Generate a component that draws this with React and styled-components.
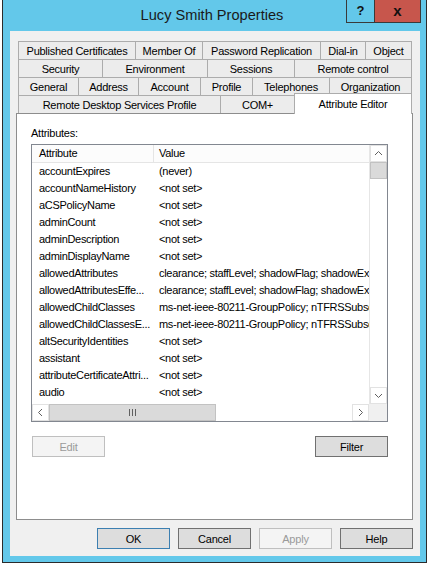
import React from "react"
import styled, { createGlobalStyle } from "styled-components"

const GlobalStyle = createGlobalStyle`
body {
  margin: 0;
  background: #fff;
  font-family: "Liberation Sans", Arial, sans-serif;
  color: #000;
}
`

const tabRows = [
    [
        { label: "Published Certificates", w: 117 },
        { label: "Member Of", w: 67 },
        { label: "Password Replication", w: 118 },
        { label: "Dial-in", w: 45 },
        { label: "Object", w: 46 },
    ],
    [
        { label: "Security", w: 84 },
        { label: "Environment", w: 105 },
        { label: "Sessions", w: 87 },
        { label: "Remote control", w: 117 },
    ],
    [
        { label: "General", w: 60 },
        { label: "Address", w: 60 },
        { label: "Account", w: 62 },
        { label: "Profile", w: 52 },
        { label: "Telephones", w: 77 },
        { label: "Organization", w: 82 },
    ],
    [
        { label: "Remote Desktop Services Profile", w: 202 },
        { label: "COM+", w: 74 },
        { label: "Attribute Editor", w: 117, active: true },
    ],
]

const attributes = [
    ["accountExpires", "(never)"],
    ["accountNameHistory", "<not set>"],
    ["aCSPolicyName", "<not set>"],
    ["adminCount", "<not set>"],
    ["adminDescription", "<not set>"],
    ["adminDisplayName", "<not set>"],
    ["allowedAttributes", "clearance; staffLevel; shadowFlag; shadowExpire; shadowInactive"],
    ["allowedAttributesEffe...", "clearance; staffLevel; shadowFlag; shadowExpire; shadowInactive"],
    ["allowedChildClasses", "ms-net-ieee-80211-GroupPolicy; nTFRSSubscriptions; classStore"],
    ["allowedChildClassesE...", "ms-net-ieee-80211-GroupPolicy; nTFRSSubscriptions; classStore"],
    ["altSecurityIdentities", "<not set>"],
    ["assistant", "<not set>"],
    ["attributeCertificateAttri...", "<not set>"],
    ["audio", "<not set>"],
    ["authOrig", "<not set>"],
]

const Window = styled.div`
box-sizing: border-box;
margin-left: 2px;
width: 425px;
height: 563px;
display: flex;
flex-direction: column;
background: #63c8ea;
border: 1px solid #2b2b2b;
border-top: none;
padding: 0 6px 6px 7px;
`

const TitleBar = styled.div`
display: grid;
grid-template-columns: 1fr auto 1fr;
height: 31px;
margin: 0 -6px 0 -7px;
padding-right: 5px;
flex-shrink: 0;
`

const Title = styled.div`
grid-column: 2;
font-size: 14.6px;
line-height: 31px;
color: #1a1a1a;
white-space: nowrap;
`

const Captions = styled.div`
grid-column: 3;
justify-self: end;
align-self: start;
display: flex;
border: 1px solid #3a3a3a;
border-top: none;
height: 22px;
`

const CaptionButton = styled.div`
width: ${p => p.w}px;
background: ${p => p.close ? "#c7564c" : "transparent"};
border-left: ${p => p.close ? "1px solid #3a3a3a" : "none"};
display: flex;
align-items: center;
justify-content: center;
font-weight: bold;
font-size: ${p => p.close ? "15px" : "13px"};
color: #111;
line-height: 1;
padding-bottom: 2px;
box-sizing: border-box;
`

const Body = styled.div`
flex: 1;
display: flex;
flex-direction: column;
background: #f0f0f0;
padding: 10px 7px 0 6px;
`

const TabStrip = styled.div`
display: flex;
flex-direction: column;
margin-left: 2px;
`

const TabRow = styled.div`
display: flex;
align-items: flex-end;
height: 19px;
margin-bottom: -1px;
`

const Tab = styled.div`
box-sizing: border-box;
flex-shrink: 0;
width: ${p => p.w + 1}px;
height: ${p => p.active ? 21 : 19}px;
margin-right: -1px;
border: 1px solid #acacac;
border-bottom: ${p => p.active ? "none" : "1px solid #acacac"};
background: ${p => p.active ? "#fff" : "#ececec"};
position: ${p => p.active ? "relative" : "static"};
z-index: ${p => p.active ? 1 : "auto"};
display: flex;
align-items: center;
justify-content: center;
font-size: 11px;
letter-spacing: -0.25px;
white-space: nowrap;
padding-top: ${p => p.active ? 0 : 0}px;
`

const Panel = styled.div`
box-sizing: border-box;
height: 407px;
background: #fff;
border: 1px solid #8d8d8d;
padding: 12px 24px 0 14px;
display: flex;
flex-direction: column;
`

const Label = styled.div`
font-size: 11px;
letter-spacing: -0.25px;
line-height: 14px;
margin-bottom: 4px;
`

const ListBox = styled.div`
box-sizing: border-box;
width: 357px;
height: 278px;
border: 1px solid #828790;
display: grid;
grid-template-columns: 337px 18px;
grid-template-rows: 259px 17px;
`

const ListView = styled.div`
overflow: hidden;
`

const HeaderRow = styled.div`
display: flex;
height: 17px;
border-bottom: 1px solid #e5e5e5;
background: #fcfcfc;
`

const Row = styled.div`
display: flex;
height: 17px;
`

const Cell = styled.div`
box-sizing: border-box;
flex-shrink: 0;
width: ${p => p.first ? "122px" : "auto"};
flex: ${p => p.first ? "none" : 1};
padding-left: ${p => p.first ? 7 : 5}px;
border-right: ${p => p.head && p.first ? "1px solid #e5e5e5" : "none"};
font-size: 11px;
letter-spacing: -0.3px;
line-height: 17px;
white-space: nowrap;
overflow: hidden;
`

const VScroll = styled.div`
display: flex;
flex-direction: column;
border-left: 1px solid #e6e6e6;
background: #fff;
`

const HScroll = styled.div`
display: flex;
background: #fff;
`

const ArrowBox = styled.div`
box-sizing: border-box;
flex-shrink: 0;
width: 17px;
height: 17px;
border: 1px solid #e2e2e2;
display: flex;
align-items: center;
justify-content: center;
background: #fff;
`

const Track = styled.div`
flex: 1;
`

const Thumb = styled.div`
box-sizing: border-box;
flex-shrink: 0;
width: ${p => p.horizontal ? "167px" : "17px"};
height: 17px;
background: #dadada;
border: 1px solid #c2c2c2;
display: flex;
align-items: center;
justify-content: center;
`

const Corner = styled.div`
background: #f0f0f0;
`

const Actions = styled.div`
display: flex;
justify-content: space-between;
margin-top: 14px;
padding-left: 1px;
`

const Button = styled.div`
box-sizing: border-box;
width: 73px;
height: 21px;
display: flex;
align-items: center;
justify-content: center;
font-size: 11px;
letter-spacing: -0.2px;
background: ${p => p.disabled ? "#f4f4f4" : "#dddddd"};
border: 1px solid ${p => p.disabled ? "#bfbfbf" : p.primary ? "#3c7fb1" : "#707070"};
color: ${p => p.disabled ? "#9a9a9a" : "#000"};
`

const Footer = styled.div`
display: flex;
justify-content: flex-end;
gap: 8px;
margin-top: 8px;
`

const Chevron = ({ dir }) => {
    const pts = {
        up: "5,10 8.5,6.5 12,10",
        down: "5,7 8.5,10.5 12,7",
        left: "10,5 6.5,8.5 10,12",
        right: "7,5 10.5,8.5 7,12",
    }[dir]
    return (
        <svg width="15" height="15" viewBox="1 1 15 15">
            <polyline points={pts} fill="none" stroke="#606060" strokeWidth="1" />
        </svg>
    )
}

const Grip = () => (
    <svg width="9" height="7" viewBox="0 0 9 7">
        <path d="M1.5 0v7M4.5 0v7M7.5 0v7" stroke="#606060" strokeWidth="1" />
    </svg>
)

export default function App() {
    return (
        <>
            <GlobalStyle />
            <Window>
                <TitleBar>
                    <Title>Lucy Smith Properties</Title>
                    <Captions>
                        <CaptionButton w={27}>?</CaptionButton>
                        <CaptionButton w={46} close>x</CaptionButton>
                    </Captions>
                </TitleBar>
                <Body>
                    <TabStrip>
                        {tabRows.map((row, i) =>
                            <TabRow key={i}>
                                {row.map(tab =>
                                    <Tab key={tab.label} w={tab.w} active={tab.active}>{tab.label}</Tab>)}
                            </TabRow>)}
                    </TabStrip>
                    <Panel>
                        <Label>Attributes:</Label>
                        <ListBox>
                            <ListView>
                                <HeaderRow>
                                    <Cell first head>Attribute</Cell>
                                    <Cell head>Value</Cell>
                                </HeaderRow>
                                {attributes.map(([name, value]) =>
                                    <Row key={name}>
                                        <Cell first>{name}</Cell>
                                        <Cell>{value}</Cell>
                                    </Row>)}
                            </ListView>
                            <VScroll>
                                <ArrowBox><Chevron dir="up" /></ArrowBox>
                                <Thumb />
                                <Track />
                                <ArrowBox><Chevron dir="down" /></ArrowBox>
                            </VScroll>
                            <HScroll>
                                <ArrowBox><Chevron dir="left" /></ArrowBox>
                                <Thumb horizontal><Grip /></Thumb>
                                <Track />
                                <ArrowBox><Chevron dir="right" /></ArrowBox>
                            </HScroll>
                            <Corner />
                        </ListBox>
                        <Actions>
                            <Button disabled>Edit</Button>
                            <Button>Filter</Button>
                        </Actions>
                    </Panel>
                    <Footer>
                        <Button primary>OK</Button>
                        <Button>Cancel</Button>
                        <Button disabled>Apply</Button>
                        <Button>Help</Button>
                    </Footer>
                </Body>
            </Window>
        </>
    )
}
